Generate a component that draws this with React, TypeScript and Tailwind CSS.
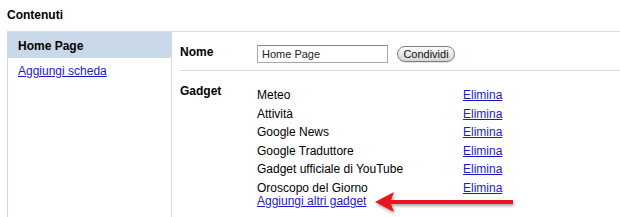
import React from "react";

const gadgets = [
  "Meteo",
  "Attività",
  "Google News",
  "Google Traduttore",
  "Gadget ufficiale di YouTube",
  "Oroscopo del Giorno",
];

export default function App() {
  return (
    <div className="relative w-[620px] h-[217px] overflow-hidden bg-white text-black font-['Liberation_Sans',Arial,sans-serif] text-[12px] leading-[14px]">
      <div className="pl-[7px] pt-[8px] h-[31px] font-bold text-[12px]">Contenuti</div>
      <div className="flex ml-[7px] border-t border-[#cfdcea] h-[186px]">
        <div className="w-[165px] border-x border-[#cfdcea] h-full">
          <div className="bg-[#c9d9ea] h-[26px] pl-[10px] pt-[7px] font-bold">Home Page</div>
          <div className="pl-[10px] pt-[6px]">
            <a href="#" className="text-[#1a1acc] underline">Aggiungi scheda</a>
          </div>
        </div>
        <div className="flex-1 pl-[8px]">
          <div className="flex items-center h-[39px] border-b border-[#d8d8d8]">
            <div className="w-[77px] font-bold pt-[2px]">Nome</div>
            <div className="flex items-center mt-[5px]">
              <div className="w-[131px] h-[18px] border border-[#a9a9a9] border-t-[#8a8a8a] pl-[4px] text-[11px] leading-[16px] text-[#222]">
                Home Page
              </div>
              <div className="ml-[9px] w-[58px] h-[16px] rounded-full border border-[#7d7d7d] bg-gradient-to-b from-[#fbfbfb] to-[#d6d6d6] text-[11px] leading-[14px] text-center text-[#111] shadow-[0_1px_0_rgba(0,0,0,0.1)]">
                Condividi
              </div>
            </div>
          </div>
          <div className="flex pt-[13px]">
            <div className="w-[77px] font-bold">Gadget</div>
            <div className="flex flex-col pt-[4px]">
              {gadgets.map((g, i) => (
                <div key={g} className={`flex ${i < gadgets.length - 1 ? "mb-[4.6px]" : ""}`}>
                  <div className="w-[206px]">{g}</div>
                  <a href="#" className="text-[#1a1acc] underline">Elimina</a>
                </div>
              ))}
              <a href="#" className="text-[#1a1acc] underline -mt-[1px]">Aggiungi altri gadget</a>
            </div>
          </div>
        </div>
      </div>
      <svg
        className="absolute left-[370px] top-[186px]"
        width="150"
        height="30"
        viewBox="0 0 150 30"
      >
        <defs>
          <filter id="sh" x="-10%" y="-30%" width="120%" height="160%">
            <feGaussianBlur in="SourceAlpha" stdDeviation="1.5" />
            <feOffset dx="1" dy="2" result="b" />
            <feComponentTransfer>
              <feFuncA type="linear" slope="0.35" />
            </feComponentTransfer>
            <feMerge>
              <feMergeNode />
              <feMergeNode in="SourceGraphic" />
            </feMerge>
          </filter>
        </defs>
        <g filter="url(#sh)">
          <path d="M5 16 L24 6 L21 14 L143 14 L143 18 L21 18 L24 26 Z" fill="#e5141b" />
        </g>
      </svg>
    </div>
  );
}
